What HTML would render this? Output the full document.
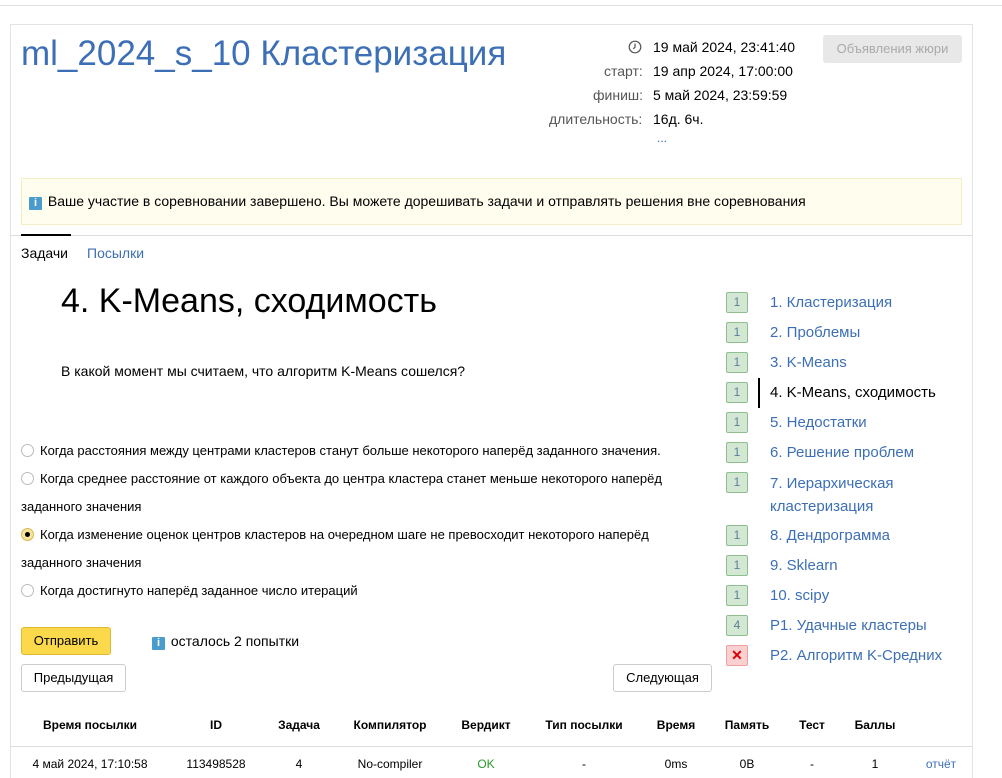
<!DOCTYPE html><html style="overflow:hidden;height:778px"><head><meta charset="utf-8"><style>
*{margin:0;padding:0;box-sizing:border-box}
body{width:1002px;height:778px;overflow:hidden;background:#fff;font-family:"Liberation Sans",Arial,sans-serif;color:#000;position:relative}
.a{position:absolute;white-space:nowrap}
.blue{color:#3d6fb6}
.r{width:13px;height:13px;border:1px solid #bbb;border-radius:50%;display:inline-block;vertical-align:-2px;margin-right:6px;background:#fff}
.badge{position:absolute;left:726px;width:22px;height:21px;border:1px solid #8fbf8f;background:#d2e8d2;border-radius:2px;color:#5c7d9c;font-size:12px;text-align:center;line-height:19px}
.lk{position:absolute;left:770px;font-size:15px;color:#3d6fb6;white-space:nowrap}
.btn{position:absolute;border:1px solid #ccc;border-radius:3px;background:#fff;font-size:13px;text-align:center}
.th{position:absolute;top:718px;font-size:12px;font-weight:bold;transform:translateX(-50%);white-space:nowrap}
.td{position:absolute;top:757px;font-size:12px;transform:translateX(-50%);white-space:nowrap}
.info{display:inline-block;width:13px;height:13px;background:#4a9ccc;color:#fff;font-size:11px;font-weight:bold;text-align:center;line-height:13px;vertical-align:-1px;border-radius:1px;margin-right:2px;position:relative;top:-1px}
</style></head><body>
<div class="a" style="left:0;top:5px;width:1002px;height:1px;background:#e2e2e2"></div>
<div class="a" style="left:10px;top:24px;width:963px;height:760px;border:1px solid #e3e3e3;border-bottom:none"></div>
<div class="a blue" style="left:21px;top:34px;font-size:35px">ml_2024_s_10 Кластеризация</div>
<svg class="a" style="left:628px;top:40px" width="14" height="14" viewBox="0 0 14 14"><circle cx="7" cy="7" r="5.8" fill="none" stroke="#555" stroke-width="1.2"/><path d="M7 3.5V7.3L5.2 8.8" fill="none" stroke="#555" stroke-width="1.2"/></svg>
<div class="a" style="left:653px;top:39px;font-size:14px">19 май 2024, 23:41:40</div>
<div class="a" style="left:604px;top:63px;font-size:14px;color:#555">старт:</div>
<div class="a" style="left:653px;top:63px;font-size:14px">19 апр 2024, 17:00:00</div>
<div class="a" style="left:593px;top:87px;font-size:14px;color:#555">финиш:</div>
<div class="a" style="left:653px;top:87px;font-size:14px">5 май 2024, 23:59:59</div>
<div class="a" style="left:549px;top:111px;font-size:14px;color:#555">длительность:</div>
<div class="a" style="left:653px;top:111px;font-size:14px">16д. 6ч.</div>
<div class="a blue" style="left:657px;top:131px;font-size:12px">...</div>
<div class="a" style="left:823px;top:35px;width:139px;height:28px;background:#e8e8e8;border-radius:3px;color:#aaa;font-size:13px;text-align:center;line-height:28px">Объявления жюри</div>
<div class="a" style="left:21px;top:178px;width:941px;height:47px;background:#fffdee;border:1px solid #f3eec6"></div>
<div class="a" style="left:29px;top:193px;font-size:14px"><span class="info">i</span> Ваше участие в соревновании завершено. Вы можете дорешивать задачи и отправлять решения вне соревнования</div>
<div class="a" style="left:11px;top:235px;width:961px;height:1px;background:#ddd"></div>
<div class="a" style="left:21px;top:234px;width:50px;height:2px;background:#000"></div>
<div class="a" style="left:21px;top:245px;font-size:14px">Задачи</div>
<div class="a blue" style="left:87px;top:245px;font-size:14px">Посылки</div>
<div class="a" style="left:61px;top:282px;font-size:34px">4. K-Means, сходимость</div>
<div class="a" style="left:61px;top:363px;font-size:14px">В какой момент мы считаем, что алгоритм K-Means сошелся?</div>
<div class="a" style="left:21px;top:437px;font-size:13px;line-height:28px;white-space:normal;width:680px">
<div><span class="r"></span>Когда расстояния между центрами кластеров станут больше некоторого наперёд заданного значения.</div>
<div><span class="r"></span>Когда среднее расстояние от каждого объекта до центра кластера станет меньше некоторого наперёд<br>заданного значения</div>
<div><span class="r" style="background:#f7e3a0;border-color:#d8b84c;position:relative"><span style="position:absolute;left:3px;top:3px;width:5px;height:5px;border-radius:50%;background:#000"></span></span>Когда изменение оценок центров кластеров на очередном шаге не превосходит некоторого наперёд<br>заданного значения</div>
<div><span class="r"></span>Когда достигнуто наперёд заданное число итераций</div>
</div>
<div class="a" style="left:21px;top:627px;width:90px;height:28px;background:#fcd94a;border:1px solid #e0b830;border-radius:3px;font-size:13px;text-align:center;line-height:26px">Отправить</div>
<div class="a" style="left:152px;top:633px;font-size:14px"><span class="info">i</span> осталось 2 попытки</div>
<div class="btn" style="left:21px;top:664px;width:105px;height:28px;line-height:26px">Предыдущая</div>
<div class="btn" style="left:613px;top:664px;width:99px;height:28px;line-height:26px">Следующая</div>
<div class="a" style="left:758px;top:378px;width:2px;height:30px;background:#000"></div>
<div class="badge" style="top:292px">1</div><div class="lk" style="top:294px">1. Кластеризация</div>
<div class="badge" style="top:322px">1</div><div class="lk" style="top:324px">2. Проблемы</div>
<div class="badge" style="top:352px">1</div><div class="lk" style="top:354px">3. K-Means</div>
<div class="badge" style="top:382px">1</div><div class="lk" style="top:384px;color:#000">4. K-Means, сходимость</div>
<div class="badge" style="top:412px">1</div><div class="lk" style="top:414px">5. Недостатки</div>
<div class="badge" style="top:442px">1</div><div class="lk" style="top:444px">6. Решение проблем</div>
<div class="badge" style="top:472px">1</div><div class="lk" style="top:472px;line-height:23px">7. Иерархическая<br>кластеризация</div>
<div class="badge" style="top:525px">1</div><div class="lk" style="top:527px">8. Дендрограмма</div>
<div class="badge" style="top:555px">1</div><div class="lk" style="top:557px">9. Sklearn</div>
<div class="badge" style="top:585px">1</div><div class="lk" style="top:587px">10. scipy</div>
<div class="badge" style="top:615px">4</div><div class="lk" style="top:617px">P1. Удачные кластеры</div>
<div class="badge" style="top:645px;background:#fbd0d0;border-color:#f0a0a0;color:#d00;font-weight:bold;font-size:14px">✕</div><div class="lk" style="top:647px">P2. Алгоритм K-Средних</div>
<div class="th" style="left:90px">Время посылки</div>
<div class="th" style="left:216px">ID</div>
<div class="th" style="left:299px">Задача</div>
<div class="th" style="left:390px">Компилятор</div>
<div class="th" style="left:486px">Вердикт</div>
<div class="th" style="left:584px">Тип посылки</div>
<div class="th" style="left:676px">Время</div>
<div class="th" style="left:747px">Память</div>
<div class="th" style="left:812px">Тест</div>
<div class="th" style="left:875px">Баллы</div>
<div class="a" style="left:11px;top:746px;width:961px;height:1px;background:#ddd"></div>
<div class="td" style="left:90px">4 май 2024, 17:10:58</div>
<div class="td" style="left:216px">113498528</div>
<div class="td" style="left:299px">4</div>
<div class="td" style="left:390px">No-compiler</div>
<div class="td" style="left:486px;color:#2a9a2a">OK</div>
<div class="td" style="left:584px">-</div>
<div class="td" style="left:676px">0ms</div>
<div class="td" style="left:747px">0B</div>
<div class="td" style="left:812px">-</div>
<div class="td" style="left:875px">1</div>
<div class="td blue" style="left:941px">отчёт</div>
</body></html>
